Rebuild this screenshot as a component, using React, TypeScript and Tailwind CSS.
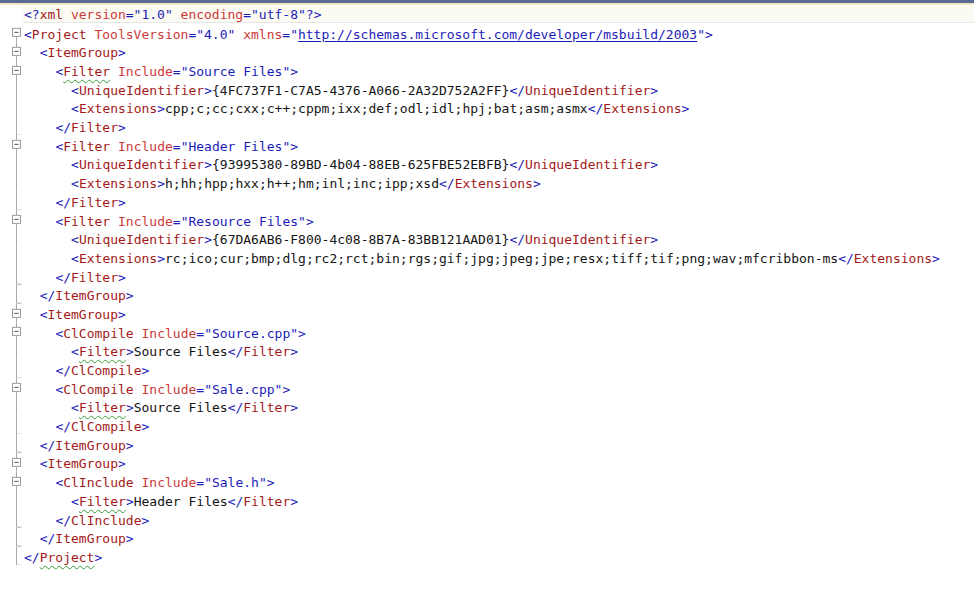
import React from "react";

type M = "none" | "boxTop" | "box" | "line" | "end";
type L = { ind: number; text: string; m: M; sq?: boolean };

const LINES: L[] = [
  { ind: 0, text: '<?xml version="1.0" encoding="utf-8"?>', m: "none" },
  { ind: 0, text: '<Project ToolsVersion="4.0" xmlns="http://schemas.microsoft.com/developer/msbuild/2003">', m: "boxTop" },
  { ind: 1, text: "<ItemGroup>", m: "box" },
  { ind: 2, text: '<Filter Include="Source Files">', m: "box", sq: true },
  { ind: 3, text: "<UniqueIdentifier>{4FC737F1-C7A5-4376-A066-2A32D752A2FF}</UniqueIdentifier>", m: "line" },
  { ind: 3, text: "<Extensions>cpp;c;cc;cxx;c++;cppm;ixx;def;odl;idl;hpj;bat;asm;asmx</Extensions>", m: "line" },
  { ind: 2, text: "</Filter>", m: "end" },
  { ind: 2, text: '<Filter Include="Header Files">', m: "box" },
  { ind: 3, text: "<UniqueIdentifier>{93995380-89BD-4b04-88EB-625FBE52EBFB}</UniqueIdentifier>", m: "line" },
  { ind: 3, text: "<Extensions>h;hh;hpp;hxx;h++;hm;inl;inc;ipp;xsd</Extensions>", m: "line" },
  { ind: 2, text: "</Filter>", m: "end" },
  { ind: 2, text: '<Filter Include="Resource Files">', m: "box" },
  { ind: 3, text: "<UniqueIdentifier>{67DA6AB6-F800-4c08-8B7A-83BB121AAD01}</UniqueIdentifier>", m: "line" },
  { ind: 3, text: "<Extensions>rc;ico;cur;bmp;dlg;rc2;rct;bin;rgs;gif;jpg;jpeg;jpe;resx;tiff;tif;png;wav;mfcribbon-ms</Extensions>", m: "line" },
  { ind: 2, text: "</Filter>", m: "end" },
  { ind: 1, text: "</ItemGroup>", m: "end" },
  { ind: 1, text: "<ItemGroup>", m: "box" },
  { ind: 2, text: '<ClCompile Include="Source.cpp">', m: "box" },
  { ind: 3, text: "<Filter>Source Files</Filter>", m: "line", sq: true },
  { ind: 2, text: "</ClCompile>", m: "end" },
  { ind: 2, text: '<ClCompile Include="Sale.cpp">', m: "box" },
  { ind: 3, text: "<Filter>Source Files</Filter>", m: "line", sq: true },
  { ind: 2, text: "</ClCompile>", m: "end" },
  { ind: 1, text: "</ItemGroup>", m: "end" },
  { ind: 1, text: "<ItemGroup>", m: "box" },
  { ind: 2, text: '<ClInclude Include="Sale.h">', m: "box" },
  { ind: 3, text: "<Filter>Header Files</Filter>", m: "line", sq: true },
  { ind: 2, text: "</ClInclude>", m: "end" },
  { ind: 1, text: "</ItemGroup>", m: "end" },
  { ind: 0, text: "</Project>", m: "end", sq: true },
];

type K = "d" | "n" | "s" | "a" | "v" | "u" | "x";
type Tok = { t: string; k: K };

function tokenize(line: string, squiggle: boolean): Tok[] {
  const out: Tok[] = [];
  let i = 0;
  let inTag = false;
  let expectName = false;
  let sqDone = false;
  while (i < line.length) {
    if (!inTag) {
      if (line[i] === "<") {
        const m = line.startsWith("</", i) ? "</" : line.startsWith("<?", i) ? "<?" : "<";
        out.push({ t: m, k: "d" });
        i += m.length;
        inTag = true;
        expectName = true;
        continue;
      }
      let j = line.indexOf("<", i);
      if (j < 0) j = line.length;
      out.push({ t: line.slice(i, j), k: "x" });
      i = j;
      continue;
    }
    const rest = line.slice(i);
    if (expectName) {
      const mm = rest.match(/^[\w:.\-]+/);
      const name = mm ? mm[0] : "";
      out.push({ t: name, k: squiggle && !sqDone ? "s" : "n" });
      sqDone = true;
      expectName = false;
      i += name.length;
      continue;
    }
    const c = line[i];
    if (c === " ") {
      out.push({ t: " ", k: "x" });
      i++;
      continue;
    }
    if (rest.startsWith("?>") || rest.startsWith("/>")) {
      out.push({ t: rest.slice(0, 2), k: "d" });
      i += 2;
      inTag = false;
      continue;
    }
    if (c === ">") {
      out.push({ t: ">", k: "d" });
      i++;
      inTag = false;
      continue;
    }
    if (c === "=") {
      out.push({ t: "=", k: "d" });
      i++;
      continue;
    }
    if (c === '"') {
      const j = line.indexOf('"', i + 1);
      const val = line.slice(i + 1, j);
      out.push({ t: '"', k: "v" });
      out.push({ t: val, k: val.startsWith("http") ? "u" : "v" });
      out.push({ t: '"', k: "v" });
      i = j + 1;
      continue;
    }
    const am = rest.match(/^[\w:.\-]+/);
    const an = am ? am[0] : c;
    out.push({ t: an, k: "a" });
    i += an.length;
  }
  return out;
}

const CLS: Record<K, string> = {
  d: "text-[#1c1cb8]",
  n: "text-[#a31a1a]",
  s: "text-[#a31a1a] underline decoration-wavy decoration-[#3a9a3a] decoration-[1px] underline-offset-[3px]",
  a: "text-[#cc3a3a]",
  v: "text-[#1c1cb8]",
  u: "text-[#1c1cb8] underline decoration-[#1c1cb8] underline-offset-[2px]",
  x: "text-[#141414]",
};

const H = 18.7;

function Margin({ m }: { m: M }) {
  const cx = 16.5;
  const cy = H / 2;
  const stroke = "#a8a8a8";
  return (
    <svg width="23" height={H} viewBox={`0 0 23 ${H}`} className="block shrink-0">
      {(m === "box" || m === "boxTop") && (
        <>
          {m === "box" && <line x1={cx} y1={0} x2={cx} y2={cy - 4} stroke={stroke} strokeWidth="1" />}
          <line x1={cx} y1={cy + 4} x2={cx} y2={H} stroke={stroke} strokeWidth="1" />
          <rect x={cx - 4} y={cy - 4} width="8" height="8" fill="#ffffff" stroke="#9a9a9a" strokeWidth="1" />
          <line x1={cx - 2.2} y1={cy} x2={cx + 2.2} y2={cy} stroke="#555555" strokeWidth="1" />
        </>
      )}
      {m === "line" && <line x1={cx} y1={0} x2={cx} y2={H} stroke={stroke} strokeWidth="1" />}
      {m === "end" && (
        <>
          <line x1={cx} y1={0} x2={cx} y2={H - 0.5} stroke={stroke} strokeWidth="1" />
          <line x1={cx} y1={H - 0.5} x2={cx + 5} y2={H - 0.5} stroke={stroke} strokeWidth="1" />
        </>
      )}
    </svg>
  );
}

const PAD = ["pl-[1px]", "pl-[16.7px]", "pl-[32.4px]", "pl-[48.1px]"];

export default function App() {
  return (
    <div
      className="w-[974px] h-[604px] overflow-hidden bg-white"
      style={{ fontFamily: '"DejaVu Sans Mono", "Liberation Mono", monospace' }}
    >
      <div className="h-[3px] bg-[#5b6a92]" />
      <div className="h-[1.65px] bg-[#f3e6c6]" />
      <div className="flex flex-col">
        {LINES.map((l, idx) => (
          <div key={idx} className="flex h-[18.7px]">
            <Margin m={l.m} />
            <div
              className={
                idx === 0
                  ? "flex-1 h-full flex items-center pt-[3px] bg-[#fcfbf3] border-b border-[#e6e6e6] " + PAD[l.ind]
                  : "flex-1 h-full flex items-center pt-[3px] " + PAD[l.ind]
              }
            >
              <span className="whitespace-pre text-[13px] leading-[15px]">
                {tokenize(l.text, !!l.sq).map((t, i) => (
                  <span key={i} className={CLS[t.k]}>
                    {t.t}
                  </span>
                ))}
              </span>
            </div>
          </div>
        ))}
      </div>
    </div>
  );
}
